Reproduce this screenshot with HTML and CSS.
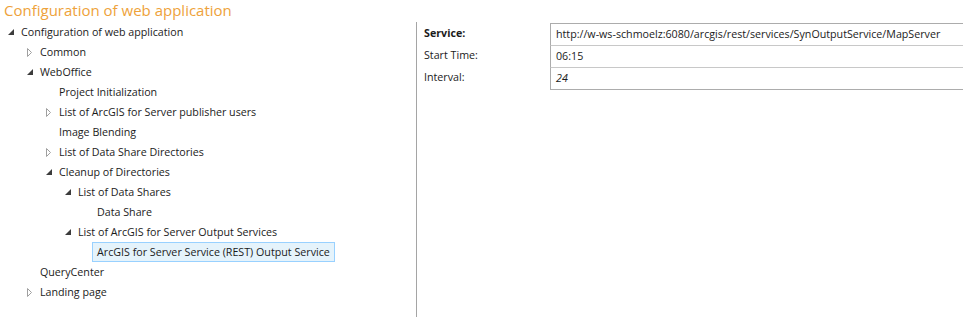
FILE: index.html
```html
<!DOCTYPE html>
<html lang="en">
<head>
    <meta charset="UTF-8">
    <title>Configuration of web application</title>
    <link rel="stylesheet" href="styles.css">
</head>
<body>
    <h1 class="title">Configuration of web application</h1>

    <div class="main">
        <div class="tree">
            <div class="node lvl0"><svg class="arrow" viewBox="0 0 19 20"><polygon class="open" points="12,7 12,13 6,13"/></svg>Configuration of web application</div>
            <div class="node lvl1"><svg class="arrow" viewBox="0 0 19 20"><polygon class="closed" points="6.5,6.5 10.5,10.5 6.5,14.5"/></svg>Common</div>
            <div class="node lvl1"><svg class="arrow" viewBox="0 0 19 20"><polygon class="open" points="12,7 12,13 6,13"/></svg>WebOffice</div>
            <div class="node lvl2"><span class="arrow"></span>Project Initialization</div>
            <div class="node lvl2"><svg class="arrow" viewBox="0 0 19 20"><polygon class="closed" points="6.5,6.5 10.5,10.5 6.5,14.5"/></svg>List of ArcGIS for Server publisher users</div>
            <div class="node lvl2"><span class="arrow"></span>Image Blending</div>
            <div class="node lvl2"><svg class="arrow" viewBox="0 0 19 20"><polygon class="closed" points="6.5,6.5 10.5,10.5 6.5,14.5"/></svg>List of Data Share Directories</div>
            <div class="node lvl2"><svg class="arrow" viewBox="0 0 19 20"><polygon class="open" points="12,7 12,13 6,13"/></svg>Cleanup of Directories</div>
            <div class="node lvl3"><svg class="arrow" viewBox="0 0 19 20"><polygon class="open" points="12,7 12,13 6,13"/></svg>List of Data Shares</div>
            <div class="node lvl4"><span class="arrow"></span>Data Share</div>
            <div class="node lvl3"><svg class="arrow" viewBox="0 0 19 20"><polygon class="open" points="12,7 12,13 6,13"/></svg>List of ArcGIS for Server Output Services</div>
            <div class="node lvl4"><span class="arrow"></span><span class="selected">ArcGIS for Server Service (REST) Output Service</span></div>
            <div class="node lvl1"><span class="arrow"></span>QueryCenter</div>
            <div class="node lvl1"><svg class="arrow" viewBox="0 0 19 20"><polygon class="closed" points="6.5,6.5 10.5,10.5 6.5,14.5"/></svg>Landing page</div>
        </div>

        <div class="props">
            <div class="grid">
                <div class="label bold">Service:</div>
                <div class="value">http://w-ws-schmoelz:6080/arcgis/rest/services/SynOutputService/MapServer</div>
                <div class="label">Start Time:</div>
                <div class="value">06:15</div>
                <div class="label">Interval:</div>
                <div class="value italic">24</div>
            </div>
        </div>
    </div>
</body>
</html>
```

FILE: styles.css
```css
body {
    font-family: "Open Sans", sans-serif;
    font-size: 10.7px;
    color: #1b1b1b;
    margin: 0;
    background-color: white;
    height: 317px;
    overflow: hidden;
}

.title {
    font-size: 15px;
    font-weight: normal;
    color: #eea23a;
    margin: 0;
    padding-left: 4px;
    height: 22px;
    line-height: 21px;
}

.main {
    display: flex;
    height: 295px;
}

.tree {
    width: 416px;
    border-right: 1px solid #a5a5a5;
}

.node {
    display: flex;
    align-items: center;
    height: 20px;
    white-space: nowrap;
}

.lvl0 { padding-left: 2px; }
.lvl1 { padding-left: 21px; }
.lvl2 { padding-left: 40px; }
.lvl3 { padding-left: 59px; }
.lvl4 { padding-left: 78px; }

.arrow {
    display: inline-block;
    flex: none;
    width: 19px;
    height: 20px;
}

.open {
    fill: #3c3c3c;
}

.closed {
    fill: white;
    stroke: #a0a0a0;
    stroke-width: 1;
}

.selected {
    margin-left: -5px;
    padding: 0 4px;
    height: 18px;
    line-height: 18px;
    border: 1px solid #99d1ff;
    background-color: #e5f3fb;
}

.props {
    flex: 1;
    padding-left: 7px;
}

.grid {
    display: grid;
    grid-template-columns: 126px 1fr;
    margin-top: 1px;
}

.label {
    height: 21px;
    line-height: 21px;
}

.bold {
    font-weight: bold;
}

.value {
    height: 21px;
    line-height: 21px;
    padding-left: 5px;
    border-left: 1px solid #acacac;
    border-top: 1px solid #c8c8c8;
    white-space: nowrap;
}

.value:nth-child(2) {
    border-top-color: #acacac;
}

.value:last-child {
    border-bottom: 1px solid #acacac;
}

.italic {
    font-style: italic;
}
```
